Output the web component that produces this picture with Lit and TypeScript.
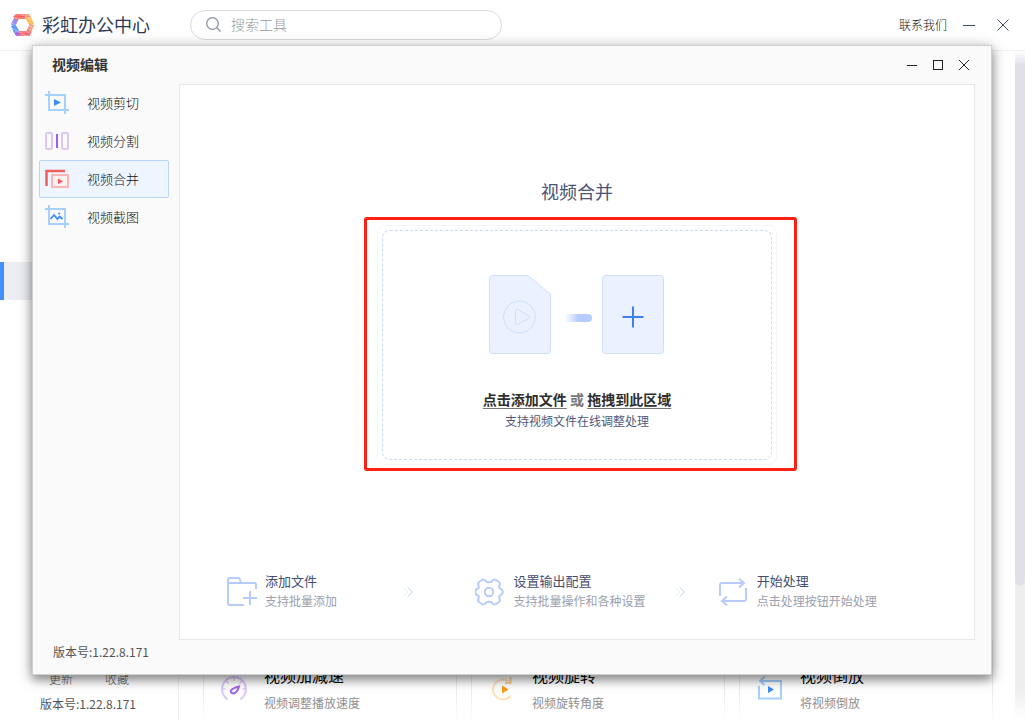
import { LitElement, html, svg, css } from "lit";
import { customElement, state } from "lit/decorators.js";

const font = css`"Noto Sans CJK SC", "Noto Sans", sans-serif`;

const reset = css`
  *, *::before, *::after { box-sizing: border-box; }
  button {
    font: inherit;
    color: inherit;
    background: none;
    border: 0;
    padding: 0;
    margin: 0;
  }
  a { color: inherit; text-decoration: none; }
  p, h1, h2, h3 { margin: 0; font-weight: 400; }
  svg { display: block; flex: none; }
`;

const cropFrame = svg`
  <path d="M4 0V19H24M0 4H20V23" fill="none" stroke="#a6d0fd" stroke-width="2"/>`;

const navIcons = {
  cut: html`<svg width="24" height="24" viewBox="0 0 24 24" aria-hidden="true">
    ${cropFrame}<path d="M9 8l7 3.5L9 15z" fill="#3a8cf8"/></svg>`,
  split: html`<svg width="24" height="24" viewBox="0 0 24 24" aria-hidden="true">
    <rect x="1" y="4" width="6" height="16" rx="1" fill="none" stroke="#dcc8f8" stroke-width="2"/>
    <rect x="17" y="4" width="6" height="16" rx="1" fill="none" stroke="#dcc8f8" stroke-width="2"/>
    <path d="M12 5v14" stroke="#9663e6" stroke-width="2"/></svg>`,
  merge: html`<svg width="24" height="24" viewBox="0 0 24 24" aria-hidden="true">
    <path d="M1.500 19V4H20" fill="none" stroke="#ef5f5b" stroke-width="2.500"/>
    <rect x="7" y="8" width="16" height="12" fill="#fff0f0" stroke="#f8b5b5" stroke-width="2"/>
    <path d="M13 11.500l5 3-5 2.500z" fill="#f0545c"/></svg>`,
  shot: html`<svg width="24" height="24" viewBox="0 0 24 24" aria-hidden="true">
    ${cropFrame}<path d="M5.500 14l3.500-4 3.500 4 2-2.500 3 2.500" fill="none" stroke="#3a8cf8" stroke-width="1.800"/>
    <circle cx="14" cy="8.500" r="1" fill="#3a8cf8"/></svg>`,
};

const stepIcons = {
  add: html`<svg width="30" height="30" viewBox="0 0 30 30" fill="none" stroke="#b5ccfc" stroke-width="2" aria-hidden="true">
    <path d="M17 28H3a2 2 0 0 1-2-2V3a2 2 0 0 1 2-2h8a2 2 0 0 1 2 1.500L14 6H27.500a1.500 1.500 0 0 1 1.500 1.500V12M1 6H14M23 14V28M16 21H30"/></svg>`,
  config: html`<svg width="30" height="30" viewBox="0 0 30 30" fill="none" stroke="#b5ccfc" stroke-width="2" aria-hidden="true">
    <g transform="translate(-1 0)"><path d="M12 4.300C13 5.500 17 5.500 18 4.300C19 2.500 20.500 2 22 3L25 5C26.200 6 26 7.500 25.300 9C24.800 10.500 25.500 11.500 26.800 12C29.500 13 29.500 17 26.800 18C25.500 18.500 24.800 19.500 25.300 21C26 22.500 26.200 24 25 25L22 27C20.500 28 19 27.500 18 25.700C17 24.500 13 24.500 12 25.700C11 27.500 9.500 28 8 27L5 25C3.800 24 4 22.500 4.700 21C5.200 19.500 4.500 18.500 3.200 18C.5 17 .5 13 3.200 12C4.500 11.500 5.200 10.500 4.700 9C4 7.500 3.800 6 5 5L8 3C9.500 2 11 2.500 12 4.300Z"/>
    <circle cx="15" cy="15" r="4.200"/></g></svg>`,
  run: html`<svg width="30" height="30" viewBox="0 -1 30 30" fill="none" stroke="#b9cafd" stroke-width="2" aria-hidden="true">
    <path d="M1 18V7a2 2 0 0 1 2-2H25M20 .8L25 5l-5 4.500M27 10V21a2 2 0 0 1-2 2H3M8 18.500L3 23l5 4.200"/></svg>`,
};

const toolIcons = {
  speed: html`<svg width="26" height="26" viewBox="0 0 26 26" fill="none" aria-hidden="true">
    <path d="M6.500 23.500L4 21A12 12 0 1 1 22 21L19.500 23.500" stroke="#ddc9f9" stroke-width="2"/>
    <path d="M13 1v4M1 13h3.500M21.500 13H25M5 5l2.500 2.500M21 5l-2.500 2.500" stroke="#ddc9f9" stroke-width="1.500"/>
    <path d="M18 10.500c-1 4.500-4 8-7 6.500s-1-4.500 7-6.500z" stroke="#a06ae8" stroke-width="2"/></svg>`,
  rotate: html`<svg width="26" height="26" viewBox="0 0 26 26" fill="none" aria-hidden="true">
    <path d="M21.500 20A10 10 0 1 1 19.500 5.200" stroke="#fde2b5" stroke-width="2"/>
    <path d="M21.500 1.500V7H16" stroke="#fbd08c" stroke-width="2"/>
    <path d="M13 9.500l6.500 4L13 17.500z" fill="#f99a10"/></svg>`,
  reverse: html`<svg width="26" height="26" viewBox="0 0 26 26" fill="none" aria-hidden="true">
    <path d="M2 10V22.500H24V5H4M7.500 1L3 5l4.500 4" stroke="#a6d0fd" stroke-width="2"/>
    <path d="M11 10l6 3.500L11 17z" fill="#3a8cf8"/></svg>`,
};

const closeIcon = html`<svg width="12" height="12" viewBox="0 0 12 12" stroke="currentColor" aria-hidden="true"><path d="M.5.5l11 11M11.500.5L.5 11.500"/></svg>`;
const smallCloseIcon = html`<svg width="12" height="12" viewBox="0 0 12 12" stroke="currentColor" aria-hidden="true"><path d="M1 1l10 10M11 1L1 11"/></svg>`;
const minIcon = html`<svg width="12" height="12" viewBox="0 0 12 12" stroke="currentColor" aria-hidden="true"><path d="M0 6.500H12"/></svg>`;
const smallMinIcon = html`<svg width="12" height="12" viewBox="0 0 12 12" stroke="currentColor" aria-hidden="true"><path d="M1 6.500H11"/></svg>`;
const maxIcon = html`<svg width="12" height="12" viewBox="0 0 12 12" fill="none" stroke="currentColor" aria-hidden="true"><rect x="1.500" y="1.500" width="9" height="9"/></svg>`;

@customElement("app-header")
class AppHeader extends LitElement {
  static styles = [reset, css`
    :host {
      display: flex;
      align-items: center;
      height: 51px;
      padding: 0 5px 0 10px;
      border-bottom: 1px solid #f1f1f3;
      background: #fff;
    }
    .title { margin-left: 7px; padding-bottom: 2px; font-size: 18px; line-height: 26px; color: #2c3a57; }
    .search {
      display: flex;
      align-items: center;
      gap: 10px;
      width: 312px;
      height: 30px;
      margin-left: 40px;
      padding: 0 15px 2px 15px;
      border: 1px solid #d9dbdf;
      border-radius: 15px;
    }
    .search input {
      flex: 1;
      min-width: 0;
      border: 0;
      padding: 0;
      outline: 0;
      background: none;
      font: inherit;
      font-size: 14px;
      color: #333;
    }
    .search input::placeholder { color: #999; opacity: 1; }
    .contact { margin-left: auto; margin-right: 5px; padding-bottom: 1px; font-size: 12px; color: #111; }
    .control { display: grid; place-items: center; width: 34px; height: 34px; color: #3d4a63; }
  `];
  render() {
    return html`
      <svg width="25" height="24" viewBox="0 0 25 24" fill="none" stroke-width="5" aria-hidden="true">
        <path d="M3 12.500L7.500 4" stroke="#9a8cf0"/>
        <path d="M5 5.500L7 3.500H17" stroke="#f4605c"/>
        <path d="M15 3.500H17.500L20 8" stroke="#f7955a"/>
        <path d="M18 5L22 12" stroke="#fbc258"/>
        <path d="M22 11.500L18 20" stroke="#f6a08c"/>
        <path d="M19.500 18L18 20.500H9" stroke="#f0606c"/>
        <path d="M10 20.500H7.500L5 16" stroke="#a558e0"/>
        <path d="M7 19L3 12" stroke="#5f9cf6"/>
        <path d="M0 9L25 23M4 4L25 16M0 14L18 24M9 0L25 9M5 2H20M5 5H20M5 19H20M5 22H20" stroke="#fff" stroke-width=".6" opacity=".6"/>
        <path d="M8.500 6.500H16L19 12L16 17.500H9L6 12Z" fill="#fff"/>
      </svg>
      <h1 class="title">彩虹办公中心</h1>
      <label class="search">
        <svg width="15" height="15" viewBox="0 0 15 15" fill="none" stroke="#8591ad" stroke-width="1.300" aria-hidden="true">
          <circle cx="6.500" cy="6.500" r="5.800"/><path d="M10.800 10.800L14.500 14.500"/>
        </svg>
        <input type="text" placeholder="搜索工具" aria-label="搜索工具">
      </label>
      <a class="contact" href="#">联系我们</a>
      <button class="control" aria-label="最小化">${minIcon}</button>
      <button class="control" aria-label="关闭">${closeIcon}</button>
    `;
  }
}

const tools = [
  { icon: toolIcons.speed, title: "视频加减速", text: "视频调整播放速度" },
  { icon: toolIcons.rotate, title: "视频旋转", text: "视频旋转角度" },
  { icon: toolIcons.reverse, title: "视频倒放", text: "将视频倒放" },
];

@customElement("tool-library")
class ToolLibrary extends LitElement {
  static styles = [reset, css`
    :host { display: grid; grid-template-columns: 179px 1fr 10px; min-height: 0; }
    .side {
      display: flex;
      flex-direction: column;
      justify-content: space-between;
      padding: 211px 0 6px;
      border-right: 1px solid #f0f0f2;
      font-size: 12px;
      line-height: 20px;
      color: #555;
    }
    .current { height: 38px; border-left: 4px solid #448ffb; background: #eceef1; }
    .links { display: flex; gap: 32px; padding-left: 49px; color: #555; }
    .version { padding: 5px 0 0 40px; }
    .cards {
      display: grid;
      grid-template-columns: repeat(3, 1fr);
      align-content: end;
      gap: 14px;
      padding: 0 22px 0 24px;
    }
    .card {
      display: grid;
      grid-template-columns: 26px 1fr;
      gap: 17px;
      align-items: center;
      height: 80px;
      padding: 16px 0 0 17px;
      border: 1px solid;
      border-image: linear-gradient(#ededf0 70%, #fff) 1;
      border-bottom: 0;
    }
    .name { font-size: 16px; line-height: 22px; color: #000; }
    .text { margin-top: 6px; font-size: 12px; line-height: 22px; color: #8e8e90; }
    .track {
      background: #eee;
      -webkit-mask-image: linear-gradient(transparent, #000 14px, #000 calc(100% - 30px), transparent);
      mask-image: linear-gradient(transparent, #000 14px, #000 calc(100% - 30px), transparent);
    }
    .thumb { height: 80%; border-radius: 5px; background: #e0e1e6; }
  `];
  render() {
    return html`
      <aside class="side">
        <div class="current"></div>
        <div>
          <div class="links"><a href="#">更新</a><a href="#">收藏</a></div>
          <p class="version">版本号:1.22.8.171</p>
        </div>
      </aside>
      <div class="cards">
        ${tools.map((t) => html`
          <a class="card" href="#">
            ${t.icon}
            <div><h2 class="name">${t.title}</h2><p class="text">${t.text}</p></div>
          </a>`)}
      </div>
      <div class="track"><div class="thumb"></div></div>
    `;
  }
}

const navItems = [
  { id: "cut", label: "视频剪切" },
  { id: "split", label: "视频分割" },
  { id: "merge", label: "视频合并" },
  { id: "shot", label: "视频截图" },
] as const;

@customElement("drop-zone")
class DropZone extends LitElement {
  static styles = [reset, css`
    :host {
      position: relative;
      display: block;
      width: 400px;
      height: 240px;
      padding: 4px;
      border: 1px solid #f3f6fd;
      border-radius: 8px;
    }
    .area {
      display: flex;
      flex-direction: column;
      align-items: center;
      height: 100%;
      padding-top: 44px;
      border: 1px dashed #c9d9fd;
      border-radius: 8px;
    }
    .prompt { margin-top: 35px; font-size: 14px; line-height: 20px; font-weight: 700; color: #777; }
    .pick {
      color: #2e2e2e;
      font-weight: 700;
      text-decoration: underline;
      text-decoration-color: #777;
      text-decoration-thickness: 1px;
      text-underline-offset: 3px;
    }
    .hint { margin-top: 2px; font-size: 12px; line-height: 20px; color: #4f5878; }
    .marker {
      position: absolute;
      inset: -9px -21px -7px -14px;
      border: 3px solid #fb2115;
      border-radius: 3px;
      pointer-events: none;
    }
  `];
  render() {
    return html`
      <div class="area">
        <svg width="176" height="79" viewBox="0 0 176 79" aria-hidden="true">
          <defs><linearGradient id="fade"><stop offset="0" stop-color="#b5ccfc" stop-opacity="0"/><stop offset=".5" stop-color="#b5ccfc"/><stop offset="1" stop-color="#b5ccfc"/></linearGradient></defs>
          <g fill="#ebf1ff" stroke="#cfdefd">
            <path d="M3.500.5H39L61.500 19V75.500a3 3 0 0 1-3 3H3.500a3 3 0 0 1-3-3V3.500a3 3 0 0 1 3-3z"/>
            <rect x="113.500" y=".5" width="61" height="78" rx="3"/>
            <circle cx="30.500" cy="42" r="16"/>
            <path d="M26.500 36v12.500q0 2 2 1L40 43.500q1.500-1.200 0-2.400L28.500 34.500q-2-.8-2 1.500z"/>
          </g>
          <path d="M76 39H99a4 4 0 0 1 0 8H76z" fill="url(#fade)"/>
          <path d="M144 31.500v21M133.500 42h21" stroke="#3f7ff5" stroke-width="2"/>
        </svg>
        <p class="prompt"><button class="pick">点击添加文件</button> 或 <span class="pick">拖拽到此区域</span></p>
        <p class="hint">支持视频文件在线调整处理</p>
      </div>
      <div class="marker"></div>
    `;
  }
}

@customElement("video-editor")
class VideoEditor extends LitElement {
  @state() private active = "merge";
  static styles = [reset, css`
    :host {
      display: flex;
      flex-direction: column;
      border: 1px solid #d0d0d0;
      background: #fafafa;
      color: #111;
    }
    .bar { display: flex; align-items: center; height: 38px; padding: 0 14px 0 19px; }
    .bar h2 { margin-right: auto; padding-bottom: 2px; font-size: 14px; font-weight: 700; color: #333; }
    .control { display: grid; place-items: center; width: 26px; height: 26px; color: #222; }
    .body { flex: 1; display: grid; grid-template-columns: 130px 1fr; gap: 10px; padding: 0 16px 0 6px; min-height: 0; }
    .side { display: flex; flex-direction: column; justify-content: space-between; }
    .nav { display: flex; flex-direction: column; }
    .item {
      display: flex;
      align-items: center;
      gap: 18px;
      height: 38px;
      padding-left: 5px;
      border: 1px solid transparent;
      border-radius: 2px;
      font-size: 13px;
    }
    .item span { padding-bottom: 2px; }
    .item[aria-current="page"] { border-color: #b9d7fc; background: #eff5ff; }
    .version { padding: 0 0 12px 14px; font-size: 12px; line-height: 20px; color: #555; }
    .panel {
      display: flex;
      flex-direction: column;
      align-items: center;
      margin-bottom: 34px;
      padding: 92px 0 26px;
      border: 1px solid #e8e8e8;
      background: #fff;
    }
    .title { margin-bottom: 20px; font-size: 18px; line-height: 28px; color: #4a5275; }
    .steps {
      display: grid;
      grid-template-columns: 176fr 72fr 199fr 44fr 158fr;
      align-items: center;
      align-self: stretch;
      margin-top: auto;
      padding: 0 97px 0 47px;
      white-space: nowrap;
    }
    .step { display: flex; align-items: center; gap: 8px; }
    .step div { padding-bottom: 2px; }
    .step h3 { font-size: 13px; line-height: 20px; color: #454d70; }
    .step p { font-size: 12px; line-height: 20px; color: #9ba0ad; }
  `];
  render() {
    const arrow = html`<svg width="10" height="10" viewBox="0 0 10 10" fill="none" aria-hidden="true">
      <path d="M.5.5L5 5 .5 9.500" stroke="#e6edfd"/><path d="M5 .5L9.500 5 5 9.500" stroke="#b9cdfb"/></svg>`;
    return html`
      <header class="bar">
        <h2>视频编辑</h2>
        <button class="control" aria-label="最小化">${smallMinIcon}</button>
        <button class="control" aria-label="最大化">${maxIcon}</button>
        <button class="control" aria-label="关闭">${smallCloseIcon}</button>
      </header>
      <div class="body">
        <aside class="side">
          <nav class="nav">
            ${navItems.map((n) => html`
              <button class="item" aria-current=${this.active === n.id ? "page" : "false"}
                @click=${() => { this.active = n.id; }}>${navIcons[n.id]}<span>${n.label}</span></button>`)}
          </nav>
          <p class="version">版本号:1.22.8.171</p>
        </aside>
        <main class="panel">
          <h2 class="title">视频合并</h2>
          <drop-zone></drop-zone>
          <div class="steps">
            <div class="step">${stepIcons.add}<div><h3>添加文件</h3><p>支持批量添加</p></div></div>
            ${arrow}
            <div class="step">${stepIcons.config}<div><h3>设置输出配置</h3><p>支持批量操作和各种设置</p></div></div>
            ${arrow}
            <div class="step">${stepIcons.run}<div><h3>开始处理</h3><p>点击处理按钮开始处理</p></div></div>
          </div>
        </main>
      </div>
    `;
  }
}

@customElement("app-root")
class AppRoot extends LitElement {
  static styles = [reset, css`
    :host {
      position: relative;
      display: grid;
      grid-template-rows: auto 1fr;
      height: 100vh;
      min-height: 640px;
      overflow: hidden;
      background: #fff;
      font-family: ${font};
      font-weight: 300;
    }
    .window {
      position: absolute;
      inset: 45px 33px 45px 32px;
      box-shadow: 0 3px 14px rgba(0, 0, 0, 0.35), 0 5px 8px rgba(0, 0, 0, 0.25);
    }
  `];
  render() {
    return html`
      <app-header></app-header>
      <tool-library></tool-library>
      <video-editor class="window" role="dialog" aria-label="视频编辑"></video-editor>
    `;
  }
}
